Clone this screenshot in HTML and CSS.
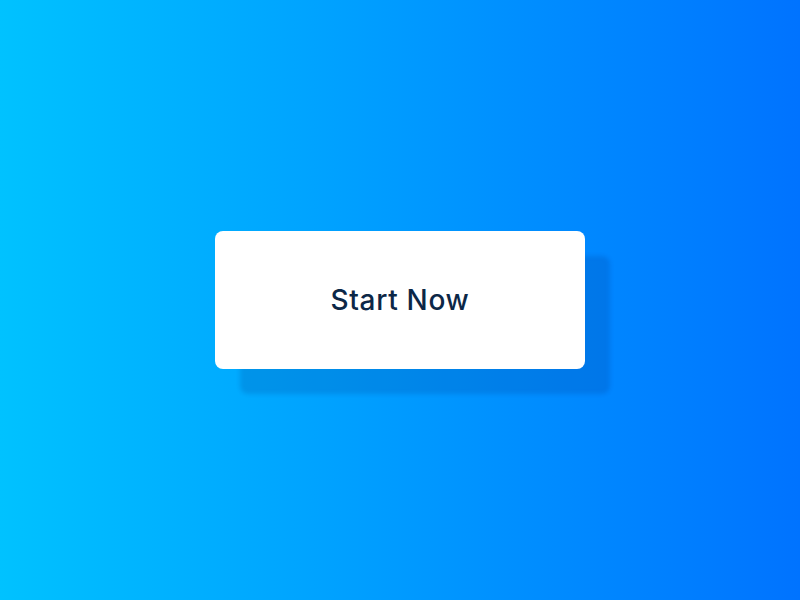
FILE: index.html
```html
<!DOCTYPE html>
<html>
<head>
<meta charset="utf-8">
<link rel="stylesheet" href="styles.css">
</head>
<body>
<main class="stage">
  <button class="cta">Start Now</button>
</main>
</body>
</html>
```
FILE: styles.css
```css
html, body {
  margin: 0;
  padding: 0;
  height: 100%;
}
.stage {
  width: 800px;
  height: 600px;
  background: linear-gradient(90deg, #00c2ff 0%, #0073ff 100%);
  display: flex;
  align-items: center;
  justify-content: center;
}
.cta {
  width: 370px;
  height: 138px;
  border: none;
  border-radius: 8px;
  background: #ffffff;
  box-shadow: 25px 25px 4px rgba(0, 40, 120, 0.16);
  color: #0c2747;
  font-family: Inter, "Noto Sans", sans-serif;
  font-size: 28px;
  font-weight: 500;
  letter-spacing: 0.7px;
  cursor: pointer;
  padding: 0;
}
```
